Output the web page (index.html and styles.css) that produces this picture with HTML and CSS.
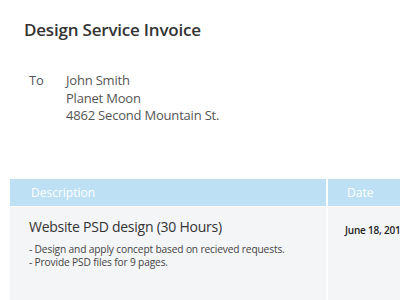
FILE: index.html
```html
<!DOCTYPE html>
<html>
<head>
<meta charset="utf-8">
<link rel="stylesheet" href="styles.css">
</head>
<body>
<div class="page">
  <h1 class="title">Design Service Invoice</h1>
  <div class="to">
    <div class="to-label">To</div>
    <div class="to-addr">
      <div>John Smith</div>
      <div>Planet Moon</div>
      <div>4862 Second Mountain St.</div>
    </div>
  </div>
  <div class="table">
    <div class="row head">
      <div class="cell desc">Description</div>
      <div class="cell date">Date</div>
    </div>
    <div class="row body">
      <div class="cell desc">
        <div class="item">Website PSD design (30 Hours)</div>
        <div class="notes">
          <div>- Design and apply concept based on recieved requests.</div>
          <div>- Provide PSD files for 9 pages.</div>
        </div>
      </div>
      <div class="cell date"><span class="when">June 18, 2013</span></div>
    </div>
  </div>
</div>
</body>
</html>
```
FILE: styles.css
```css
html, body {
  margin: 0;
  padding: 0;
  background: #ffffff;
  overflow: hidden;
}
.page {
  width: 400px;
  height: 300px;
  overflow: hidden;
  font-family: "Open Sans", "Noto Sans", sans-serif;
  color: #444;
}
.title {
  margin: 0;
  padding: 19px 0 0 24px;
  font-size: 17px;
  font-weight: 600;
  line-height: 22px;
  color: #333;
  letter-spacing: -0.2px;
}
.to {
  display: flex;
  padding: 31px 0 0 29px;
  font-size: 13px;
  line-height: 17.5px;
  color: #555;
  letter-spacing: -0.2px;
}
.to-label {
  width: 37px;
}
.table {
  margin: 54px 0 0 10px;
  width: 420px;
}
.row {
  display: flex;
  gap: 2px;
}
.head .cell {
  background: #bde0f4;
  color: #fff;
  height: 27px;
  line-height: 27px;
  font-size: 12px;
}
.head .desc { padding-left: 21px; }
.head .date { padding-left: 19px; }
.row.body {
  margin-top: 1px;
}
.body .cell {
  background: #f4f5f7;
  height: 100px;
}
.desc {
  width: 316px;
  flex: none;
  box-sizing: border-box;
}
.date {
  flex: 1;
  box-sizing: border-box;
}
.body .desc {
  padding: 10px 0 0 19px;
}
.item {
  font-size: 14px;
  line-height: 20px;
  color: #333;
  letter-spacing: -0.25px;
}
.notes {
  margin-top: 6px;
  font-size: 10.2px;
  line-height: 13.5px;
  color: #444;
  letter-spacing: -0.15px;
}
.body .date {
  padding: 10px 0 0 17px;
}
.when {
  font-size: 10px;
  font-weight: 600;
  color: #222;
  white-space: nowrap;
  letter-spacing: -0.2px;
}
```
